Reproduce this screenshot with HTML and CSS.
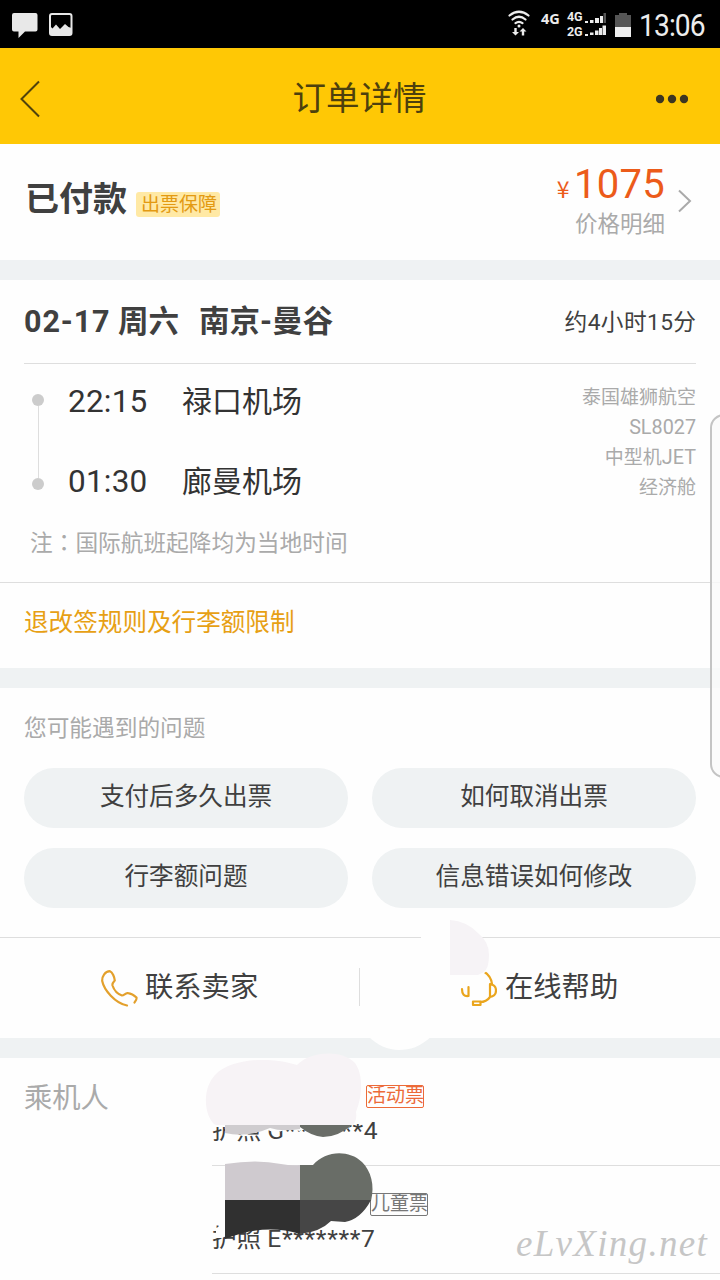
FILE: index.html
```html
<!DOCTYPE html>
<html lang="zh-CN">
<head>
<meta charset="utf-8">
<title>订单详情</title>
<link rel="stylesheet" href="styles.css">
</head>
<body>
<div class="screen">
  <div class="status">
    <svg class="status-left" width="80" height="48" viewBox="0 0 80 48">
      <path d="M14 13h21.500q2 0 2 2v14.500q0 2-2 2H25L18.500 38V31.500H14q-2 0-2-2V15q0-2 2-2z" fill="#e8e8e8"/>
      <rect x="50" y="14" width="21.500" height="21" rx="2" fill="none" stroke="#e8e8e8" stroke-width="2"/>
      <path d="M50 26l2.500 2.500 3.500-4 4 4.500 5-5 3.500 3 3 1V35H50z" fill="#e8e8e8"/>
    </svg>
    <div class="status-right">
      <svg width="24" height="48" viewBox="0 0 24 48" fill="none" stroke="#ececec" stroke-linecap="round">
        <path d="M1.500 15.500Q11 8 20.500 15.500M4.500 19.500Q11 14 17.500 19.500M7.500 23.200Q11 20.500 14.500 23.200" stroke-width="2.200"/>
        <circle cx="11" cy="26" r="1.500" fill="#ececec" stroke="none"/>
        <path d="M6.300 28h2.400v4H11L7.500 35.500 4 32h2.300zM13.800 35.500v-4h-2.300L15 28l3.500 3.500h-2.300v4z" fill="#ececec" stroke="none"/>
      </svg>
      <span class="net">4G</span>
      <div class="sims"><span>4G</span><span>2G</span></div>
      <svg class="bars" width="22" height="48" viewBox="0 0 22 48" fill="#ececec">
        <path d="M0 21h3v2H0zM5 20h3.500v3H5zM10 18h4v5h-4zM15 16h3v7h-3zM0 34h3v2H0zM5 32.500h3.500V35H5zM10 30.500h3.500V35H10zM14 28h3v7h-3zM17.500 25.500h3.500V35h-3.500z"/>
        <path d="M18.500 13h2.500v10h-2.500z" fill="#555"/>
      </svg>
      <svg width="16" height="48" viewBox="0 0 16 48"><path d="M4 13h8v2h4v12H0V15h4z" fill="#555"/><path d="M0 27h16v10H0z" fill="#eee"/></svg>
      <span class="clock">13:06</span>
    </div>
  </div>

  <header class="header">
    <svg width="24" height="40" viewBox="0 0 24 40"><path d="M20 2.500 2.500 20 20 37.500" fill="none" stroke="#51430c" stroke-width="2"/></svg>
    <h1 class="header-title">订单详情</h1>
    <svg width="32" height="10" viewBox="0 0 32 10" fill="#3c3622"><circle cx="4" cy="5" r="4.200"/><circle cx="16" cy="5" r="4.200"/><circle cx="28" cy="5" r="4.200"/></svg>
  </header>

  <section class="pay">
    <h2 class="paid">已付款</h2>
    <span class="guarantee">出票保障</span>
    <div class="price">
      <div class="amount"><span class="yen">¥</span>1075</div>
      <div class="detail">价格明细</div>
    </div>
    <svg class="chevron" width="14" height="24" viewBox="0 0 14 24"><path d="M1 1.500 12 12 1 22.500" fill="none" stroke="#aaa" stroke-width="2"/></svg>
  </section>

  <section class="flight">
    <div class="flight-head">
      <h2 class="route"><span><span class="date">02-17</span> 周六</span><span>南京-曼谷</span></h2>
      <span class="duration">约4小时15分</span>
    </div>
    <div class="flight-body">
      <div class="track"><i class="dot"></i><i class="line"></i><i class="dot"></i></div>
      <div class="legs">
        <div class="leg"><span class="time">22:15</span><span>禄口机场</span></div>
        <div class="leg"><span class="time">01:30</span><span>廊曼机场</span></div>
      </div>
      <div class="plane"><span>泰国雄狮航空</span><span class="latin">SL8027</span><span>中型机<span class="latin">JET</span></span><span>经济舱</span></div>
    </div>
    <p class="note">注<span class="colon" lang="zh-TW">：</span>国际航班起降均为当地时间</p>
    <div class="rules">退改签规则及行李额限制</div>
  </section>

  <section class="questions">
    <h3 class="questions-title">您可能遇到的问题</h3>
    <div class="question-grid">
      <div class="pill">支付后多久出票</div>
      <div class="pill">如何取消出票</div>
      <div class="pill">行李额问题</div>
      <div class="pill">信息错误如何修改</div>
    </div>
  </section>

  <section class="contact">
    <div class="contact-item">
      <svg class="phone" width="38" height="38" viewBox="0 0 38 38" fill="none" stroke="#e3a02c" stroke-width="2.200" stroke-linecap="round" stroke-linejoin="round">
        <path d="M26 35.500C14 33 3 20 1.200 11 1 6 4 1.500 9 1.200 11.500 2 13.500 7.500 13.800 10.500 12.500 12 11 13 11.500 15.500 13 20 16.500 24 21 25.500 23 25.500 24 23.500 26.500 23 30 23.500 33 25 35.500 27.500 36 29.500 34.500 31 33.500 32.500"/>
      </svg>
      <span>联系卖家</span>
    </div>
    <div class="contact-item">
      <svg class="headset" width="38" height="38" viewBox="0 0 38 38" fill="none" stroke="#eaa51d" stroke-width="2.200" stroke-linecap="round" stroke-linejoin="round">
        <path d="M25.500 1Q32 5 33 13M3 18Q3 26 9.500 25V16M31 13V26Q37 25 37 19.500 37 14 31 13M31 26Q27.500 31 21 31M14 30.500H21.500V34H14z"/>
      </svg>
      <span>在线帮助</span>
    </div>
  </section>

  <section class="passengers">
    <h3 class="passengers-title">乘机人</h3>
    <div class="people">
      <div class="person"><span class="tag tag-promo">活动票</span><p class="passport">护照 <span class="number">G*******4</span></p></div>
      <div class="person"><span class="tag tag-child">儿童票</span><p class="passport">护照 <span class="number">E*******7</span></p></div>
    </div>
  </section>

  <svg class="redaction" width="320" height="340" viewBox="190 910 320 340">
    <path d="M421 932H450V975H421z" fill="#fefefe"/>
    <path d="M450 970H488L483 974Q470 978 463 984L458 978z" fill="#fefefe"/>
    <path d="M368 1036H432C420 1047 410 1050 399 1050S377 1045 368 1036z" fill="#fefefe"/>
    <path d="M450 920Q467 921 479 934 489 942 489 955 489 968 484 972L478 975H450z" fill="#f6f3f6"/>
    <path d="M208 1116H362V1124H352L346 1130H300V1131L287 1129 276 1133 262 1128 253 1132H225V1127H208z" fill="#fefefe"/>
    <path d="M214 1124C204 1114 202 1089 215 1075 232 1057 273 1057 297 1065 310 1051 342 1049 355 1063 363 1074 363 1094 356 1112 357 1119 355 1124 352 1125H216z" fill="#f7f3f6"/>
    <path d="M225 1125H300V1129Q282 1132 270 1128 247 1138 225 1133z" fill="#cfcccf"/>
    <path d="M300 1125H352Q338 1137 323 1137 311 1136 300 1127z" fill="#6a6d68"/>
    <path d="M225 1164Q257 1159 281 1164 292 1166 300 1165V1201H225z" fill="#cfcacf"/>
    <path d="M300 1165 313 1165C325 1151 348 1149 362 1162 371 1171 375 1185 371 1201H300z" fill="#696d67"/>
    <path d="M216 1228 225 1224 235 1232 222 1238H216z" fill="#fefefe"/>
    <path d="M225 1200H300V1234Q264 1223 225 1239z" fill="#303030"/>
    <path d="M300 1200H371Q361 1219 345 1222L331 1221Q320 1232 300 1234z" fill="#464646"/>
  </svg>
  <div class="edge-panel"></div>
  <div class="watermark">eLvXing.net</div>
</div>
</body>
</html>
```

FILE: styles.css
```css
* { box-sizing: border-box; }
body, h1, h2, h3, p { margin: 0; font-weight: 400; }
body { font-family: Roboto, "Noto Sans CJK SC", sans-serif; color: #404040; background: #fefefe; }
svg { display: block; flex: none; }
.screen { position: relative; width: 720px; height: 1280px; overflow: hidden; background: #fefefe; }

.status { display: flex; justify-content: space-between; height: 48px; background: #000; color: #ececec; }
.status-right { display: flex; padding-right: 15px; }
.net { margin-left: 9px; padding-top: 9px; width: 21px; font: 700 14.5px/18px "Noto Sans", sans-serif; }
.sims { display: flex; flex-direction: column; margin-left: 5px; padding-top: 9px; width: 18px; font: 700 12.5px/15px Roboto, sans-serif; letter-spacing: -.2px; }
.bars { margin: 0 8px 0 0; }
.clock { margin-left: 8px; width: 66px; font-size: 31px; line-height: 52px; letter-spacing: -1px; transform: scaleX(.91); transform-origin: left; white-space: nowrap; }

.header { display: flex; align-items: center; justify-content: space-between; height: 96px; padding: 6px 32px 0 19px; background: #ffc805; }
.header-title { font-size: 33.5px; line-height: 44px; color: #4d400d; padding-left: 20px; }

.pay { display: flex; align-items: flex-start; height: 116px; padding: 16px 28px 0 25px; }
.paid { margin-top: 16px; font-size: 34px; line-height: 46px; font-weight: 700; }
.guarantee { margin: 32px 0 0 9px; padding: 0 3px 0 5px; width: 84px; height: 25px; border-radius: 3px; background: #ffe9a5; color: #e39a12; font-size: 19px; line-height: 25px; white-space: nowrap; }
.price { margin-left: auto; text-align: right; }
.amount { color: #ec5b1a; font-size: 40px; line-height: 50px; height: 50px; letter-spacing: .3px; }
.yen { font-size: 23px; margin-right: 4px; font-family: "Noto Sans CJK SC", sans-serif; }
.detail { font-size: 22.5px; line-height: 29px; color: #aaa; }
.chevron { margin: 29px 0 0 13px; }

.flight { border-top: 20px solid #eff2f3; border-bottom: 20px solid #eff2f3; height: 428px; }
.flight-head { display: flex; justify-content: space-between; align-items: center; height: 84px; margin: 0 24px; border-bottom: 1px solid #dedede; }
.route { display: flex; gap: 20px; font-size: 30.5px; line-height: 40px; font-weight: 700; }
.date { letter-spacing: .9px; }
.duration { font-size: 22.7px; line-height: 32px; letter-spacing: .4px; margin-right: -.4px; padding-top: 2px; }
.flight-body { display: flex; height: 156px; padding: 18px 24px 0 32px; }
.track { display: flex; flex-direction: column; align-items: center; width: 12px; padding-top: 12px; }
.dot { width: 12px; height: 12px; border-radius: 50%; background: #ccc; }
.line { width: 1px; height: 72px; background: #dedede; }
.legs { display: flex; flex-direction: column; gap: 40px; margin-left: 24px; font-size: 30px; line-height: 40px; color: #333; }
.leg { display: flex; }
.time { width: 114px; font-size: 31.5px; letter-spacing: .2px; }
.plane { display: flex; flex-direction: column; margin-left: auto; padding-top: 1px; text-align: right; font-size: 19px; line-height: 30px; color: #aaa; }
.latin { font-size: 19.8px; }
.note { height: 62px; padding: 6px 0 0 30px; font-size: 22.7px; line-height: 32px; color: #aaa; font-family: "Noto Sans CJK SC", sans-serif; }
.colon { font-family: "Noto Sans CJK TC", sans-serif; }
.rules { height: 86px; border-top: 1px solid #dedede; padding: 20px 24px 0; font-size: 24.6px; line-height: 39px; color: #e7a014; }

.questions { height: 250px; padding: 25px 24px 0; border-bottom: 1px solid #dedede; }
.questions-title { height: 55px; font-size: 22.7px; line-height: 32px; color: #aaa; }
.question-grid { display: grid; grid-template-columns: 1fr 1fr; gap: 20px 24px; }
.pill { height: 60px; border-radius: 30px; background: #eff2f3; text-align: center; font-size: 24.6px; line-height: 57px; }

.contact { display: flex; height: 120px; border-bottom: 20px solid #eff2f3; padding-top: 30px; }
.contact-item { display: flex; width: 360px; height: 38px; padding-left: 101px; gap: 6px; font-size: 28.3px; line-height: 40px; }
.contact-item:first-child { border-right: 1px solid #dedede; }
.phone { margin-top: 2px; }
.headset { margin: 3px 0 0 -2px; }
.contact-item:last-child { padding-left: 101px; gap: 8px; }

.passengers { display: flex; height: 222px; padding-left: 24px; }
.passengers-title { width: 188px; padding-top: 21px; font-size: 28.3px; line-height: 40px; color: #aaa; }
.people { flex: 1; }
.person { height: 108px; border-bottom: 1px solid #dedede; padding-top: 27px; }
.tag { display: block; margin-left: 154px; width: 58px; height: 23px; border: 1px solid; border-radius: 2px; font-size: 19px; line-height: 20px; white-space: nowrap; }
.tag-promo { color: #ec6a38; }
.tag-child { color: #777; margin-left: 158px; }
.passport { padding-top: 5px; font-size: 24.6px; line-height: 36px; }
.number { letter-spacing: .7px; }

.redaction { position: absolute; left: 190px; top: 910px; }
.edge-panel { position: absolute; left: 710px; top: 414px; width: 30px; height: 364px; border: 2px solid #c4c4c4; border-radius: 14px; background: rgba(250,250,250,.8); }
.watermark { position: absolute; left: 516px; top: 1222px; font: italic 37px/44px "Z003", "URW Chancery L", "Liberation Serif", serif; letter-spacing: 1.300px; color: #c6c6c6; white-space: nowrap; }
```
